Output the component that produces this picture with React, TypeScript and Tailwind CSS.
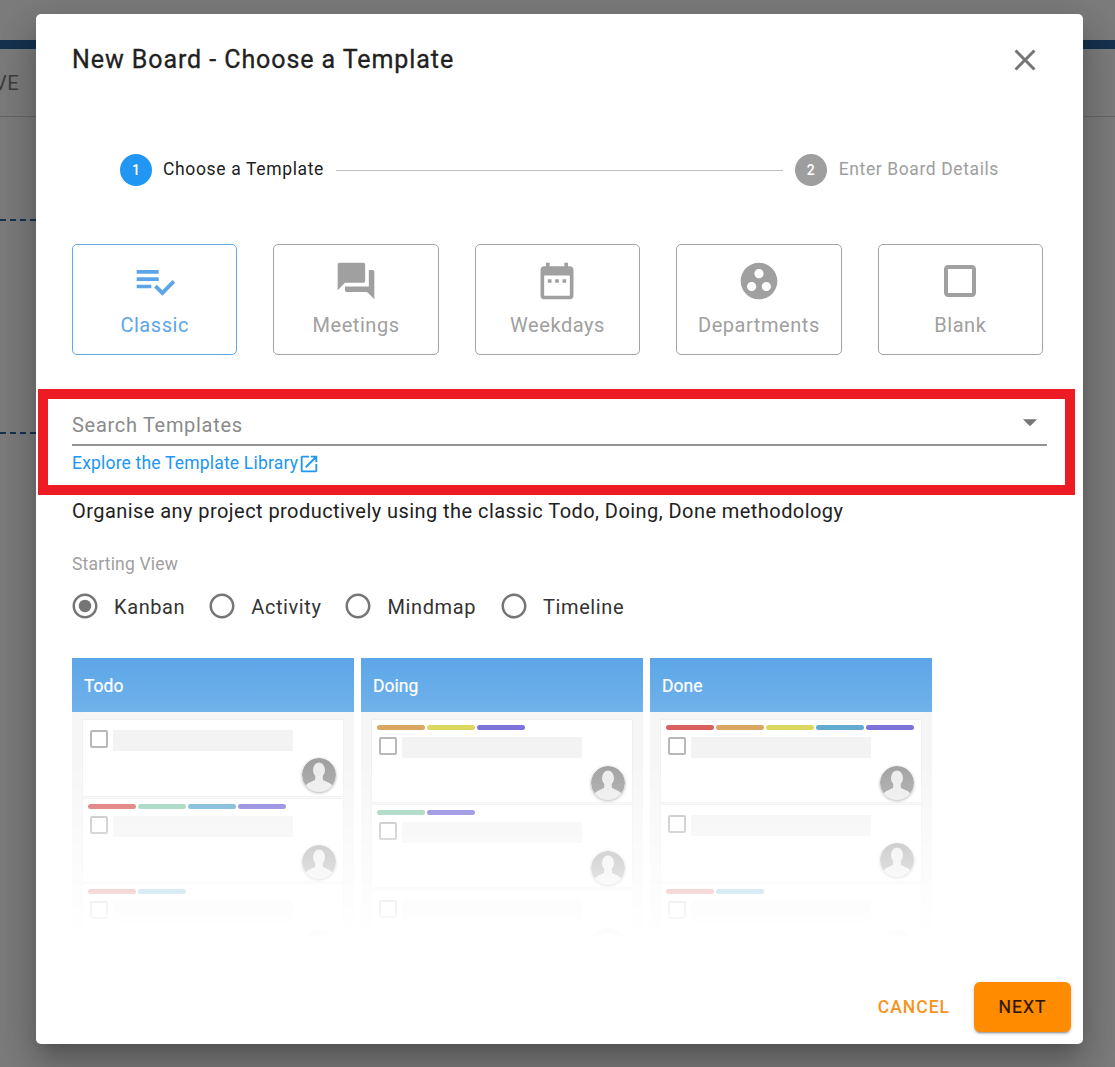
import React from 'react';

const paths = {
    classic: 'M14 10H2v2h12v-2zm0-4H2v2h12V6zM2 16h8v-2H2v2zm19.5-4.5L23 13l-6.99 7-4.51-4.5L13 14l3.01 3 5.49-5.5z',
    meetings: 'M21 6h-2v9H6v2c0 .55.45 1 1 1h11l4 4V7c0-.55-.45-1-1-1zm-4 6V3c0-.55-.45-1-1-1H3c-.55 0-1 .45-1 1v14l4-4h10c.55 0 1-.45 1-1z',
    weekdays: 'M9 11H7v2h2v-2zm4 0h-2v2h2v-2zm4 0h-2v2h2v-2zm2-7h-1V2h-2v2H8V2H6v2H5c-1.11 0-1.99.9-1.99 2L3 20c0 1.1.89 2 2 2h14c1.1 0 2-.9 2-2V6c0-1.1-.9-2-2-2zm0 16H5V9h14v11z',
    departments: 'M12 2C6.48 2 2 6.48 2 12s4.48 10 10 10 10-4.48 10-10S17.52 2 12 2zM8 17.5c-1.38 0-2.5-1.12-2.5-2.5s1.12-2.5 2.5-2.5 2.5 1.12 2.5 2.5-1.12 2.5-2.5 2.5zM9.5 8c0-1.38 1.12-2.5 2.5-2.5s2.5 1.12 2.5 2.5-1.12 2.5-2.5 2.5S9.5 9.38 9.5 8zm6.5 9.5c-1.38 0-2.5-1.12-2.5-2.5s1.12-2.5 2.5-2.5 2.5 1.12 2.5 2.5-1.12 2.5-2.5 2.5z',
    blank: 'M18 4H6c-1.1 0-2 .9-2 2v12c0 1.1.9 2 2 2h12c1.1 0 2-.9 2-2V6c0-1.1-.9-2-2-2zm0 14H6V6h12v12z',
    close: 'M19 6.41L17.59 5 12 10.59 6.41 5 5 6.41 10.59 12 5 17.59 6.41 19 12 13.41 17.59 19 19 17.59 13.41 12z',
    external: 'M19 19H5V5h7V3H5c-1.11 0-2 .9-2 2v14c0 1.1.89 2 2 2h14c1.1 0 2-.9 2-2v-7h-2v7zM14 3v2h3.59l-9.83 9.83 1.41 1.41L19 6.41V10h2V3h-7z',
    radio: 'M12 2C6.48 2 2 6.48 2 12s4.48 10 10 10 10-4.48 10-10S17.52 2 12 2zm0 18c-4.42 0-8-3.58-8-8s3.58-8 8-8 8 3.58 8 8-3.58 8-8 8z',
};

const Icon: React.FC<{ d: string; className: string }> = ({ d, className }) => (
    <svg viewBox="0 0 24 24" fill="currentColor" className={className}>
        <path d={d} />
    </svg>
);

const templates = [
    { label: 'Classic', icon: paths.classic, active: true, iconClass: 'w-[44px] h-[44px]' },
    { label: 'Meetings', icon: paths.meetings, iconClass: 'w-[44px] h-[44px]' },
    { label: 'Weekdays', icon: paths.weekdays, iconClass: 'w-[44px] h-[44px]' },
    { label: 'Departments', icon: paths.departments, iconClass: 'w-[44px] h-[44px]' },
    { label: 'Blank', icon: paths.blank, iconClass: 'w-[48px] h-[48px] -my-[2px]' },
];

const views = [
    { label: 'Kanban', checked: true, className: 'mr-[24px]' },
    { label: 'Activity', className: 'mr-[24px]' },
    { label: 'Mindmap', className: 'mr-[25px]' },
    { label: 'Timeline', className: '' },
];

const red = 'bg-[#d9605f]';
const orange = 'bg-[#d9a75f]';
const yellow = 'bg-[#dcd75f]';
const green = 'bg-[#8fcfb2]';
const blue = 'bg-[#62abd0]';
const purple = 'bg-[#7b73d9]';

const columns = [
    {
        title: 'Todo',
        cards: [[], [red, green, blue, purple], [red, blue]],
    },
    {
        title: 'Doing',
        cards: [[orange, yellow, purple], [green, purple], []],
    },
    {
        title: 'Done',
        cards: [[red, orange, yellow, blue, purple], [], [red, blue]],
    },
];

const Avatar = () => (
    <svg viewBox="0 0 34 34" className="w-[34px] h-[34px] rounded-full shadow-[0_1px_3px_rgba(0,0,0,0.35)]">
        <circle cx="17" cy="17" r="17" fill="#a0a0a0" />
        <ellipse cx="17" cy="12" rx="6" ry="7.5" fill="#ececec" />
        <path d="M13.5 17h7l.5 5 6.500 3c1.500.8 2.500 2 3 3.500C27.500 32 22.500 34 17 34S6.500 32 3.500 28.500c.5-1.500 1.500-2.700 3-3.500l6.500-3z" fill="#ececec" />
    </svg>
);

const MiniCard: React.FC<{ labels: string[] }> = ({ labels }) => {
    const hasLabels = labels.length > 0;
    return (
        <div className={`bg-white border border-[#f0f0f0] px-[6px] pt-[5px] mb-px ${hasLabels ? 'pb-[2px]' : 'pb-[4px]'}`}>
            {hasLabels && (
                <div className="flex gap-[2px] mb-[7px] -ml-px">
                    {labels.map((color, i) => (
                        <div key={i} className={`w-[48px] h-[5px] rounded-full ${color}`} />
                    ))}
                </div>
            )}
            <div className={`flex gap-[5px] ml-px ${hasLabels ? '' : 'pt-[5px]'}`}>
                <div className="w-[18px] h-[18px] rounded-[2px] border-2 border-[#b8b8b8] bg-white" />
                <div className="w-[180px] h-[21px] bg-[#f3f3f3]" />
            </div>
            <div className={`flex justify-end mr-px ${hasLabels ? 'mt-[8px]' : 'mt-[7px]'}`}>
                <Avatar />
            </div>
        </div>
    );
};

const App: React.FC = () => {
    return (
        <div className="relative w-screen h-screen overflow-hidden bg-[#7c7c7c] font-['Roboto',sans-serif]">
            {/* Page behind the dialog */}
            <div className="absolute inset-0">
                <div className="mt-[40px] h-[9px] bg-[#16324f]" />
                <div className="h-[68px] border-b border-[#666666] flex items-center">
                    <span className="-ml-[6px] text-[20px] text-[#3d3d3d] tracking-[0.02em]">VE</span>
                </div>
                <div className="mt-[102px] w-[36px] border-t-2 border-dashed border-[#16324f]" />
                <div className="mt-[211px] w-[36px] border-t-2 border-dashed border-[#16324f]" />
            </div>

            {/* Dialog */}
            <div className="relative ml-[36px] mt-[14px] w-[1047px] h-[1030px] bg-white rounded-[5px] px-[36px] shadow-[0_11px_15px_-7px_rgba(0,0,0,0.2),0_24px_38px_3px_rgba(0,0,0,0.14),0_9px_46px_8px_rgba(0,0,0,0.12)]">
                <div className="flex items-start justify-between h-[90px]">
                    <h2 className="mt-[30px] text-[25px] leading-[32px] font-normal tracking-[0.92px] text-[#212121] [-webkit-text-stroke:0.3px_#212121]">
                        New Board - Choose a Template
                    </h2>
                    <Icon d={paths.close} className="w-[36px] h-[36px] mt-[28px] mr-[4px] text-[#757575]" />
                </div>

                {/* Stepper */}
                <div className="flex items-center mt-[50px] mx-[48px] h-[32px] text-[17.5px] tracking-[0.65px]">
                    <div className="w-[32px] h-[32px] rounded-full bg-[#2196f3] text-white text-[14px] font-medium tracking-normal flex items-center justify-center">1</div>
                    <span className="ml-[11px] -mt-[2px] text-[#212121]">Choose a Template</span>
                    <div className="flex-1 mx-[12px] border-t border-[#bdbdbd]" />
                    <div className="w-[32px] h-[32px] rounded-full bg-[#9e9e9e] text-white text-[14px] font-medium tracking-normal flex items-center justify-center">2</div>
                    <span className="ml-[12px] -mt-[2px] text-[#9e9e9e] tracking-[0.6px]">Enter Board Details</span>
                </div>

                {/* Template choices */}
                <div className="grid grid-cols-5 gap-[36px] mt-[58px] w-[971px]">
                    {templates.map((t) => (
                        <div
                            key={t.label}
                            className={`h-[111px] rounded-[5px] border flex flex-col items-center pt-[14px] ${t.active ? 'border-[#64a8e6] text-[#5ca6e8]' : 'border-[#a3a3a3] text-[#a0a0a0]'}`}
                        >
                            <Icon d={t.icon} className={t.iconClass} />
                            <span className="mt-[10px] text-[20px] leading-[24px] tracking-[0.55px]">{t.label}</span>
                        </div>
                    ))}
                </div>

                {/* Template search */}
                <div className="mt-[44px] h-[47px] border-b-2 border-[#949494] flex items-center justify-between">
                    <span className="mt-[7px] text-[20px] tracking-[0.7px] text-[#8a8a8a]">Search Templates</span>
                    <svg viewBox="0 0 24 24" fill="currentColor" className="w-[34px] h-[34px] mr-0 text-[#757575]">
                        <path d="M7 10l5 5 5-5z" />
                    </svg>
                </div>
                <div className="h-[33px] pt-[2px] flex items-center text-[17.5px] tracking-[0.01071em] text-[#2196f3]">
                    Explore the Template Library
                    <Icon d={paths.external} className="w-[22px] h-[22px]" />
                </div>

                <p className="mt-[17px] h-[30px] leading-[30px] text-[20px] tracking-[0.44px] text-[#212121]">
                    Organise any project productively using the classic Todo, Doing, Done methodology
                </p>

                <div className="mt-[27px] h-[22px] leading-[22px] text-[17.5px] text-[#a0a0a0] tracking-[0.01071em]">Starting View</div>

                <div className="mt-[16px] h-[30px] flex items-center">
                    {views.map((v) => (
                        <div key={v.label} className={`flex items-center ${v.className}`}>
                            <svg viewBox="0 0 24 24" fill="currentColor" className="w-[30px] h-[30px] -ml-[2.5px] text-[#757575]">
                                <path d={paths.radio} />
                                {v.checked && <circle cx="12" cy="12" r="5" />}
                            </svg>
                            <span className="ml-[14.5px] mt-px text-[20px] tracking-[0.6px] text-[#333333]">{v.label}</span>
                        </div>
                    ))}
                </div>

                {/* Board preview */}
                <div className="mt-[37px] h-[282px] flex gap-[7px] overflow-hidden">
                    {columns.map((col) => (
                        <div key={col.title} className="w-[282px]">
                            <div className="h-[54px] bg-gradient-to-b from-[#5ca6e8] to-[#70b2ea] flex items-center pl-[12px] pt-[2px] text-[17.5px] text-white [-webkit-text-stroke:0.2px_white]">
                                {col.title}
                            </div>
                            <div className="h-[228px] bg-[#f6f6f6] px-[10px] pt-[7px] overflow-hidden [mask-image:linear-gradient(to_bottom,black_50px,rgba(0,0,0,0.45)_140px,transparent_226px)]">
                                {col.cards.map((labels, i) => (
                                    <MiniCard key={i} labels={labels} />
                                ))}
                            </div>
                        </div>
                    ))}
                </div>

                {/* Actions */}
                <div className="mt-[42px] -mr-[24px] flex items-center justify-end">
                    <span className="mr-[24px] text-[17.5px] font-medium tracking-[1px] text-[#f7931e]">CANCEL</span>
                    <div className="w-[97px] h-[50px] rounded-[6px] bg-[#ff8c00] flex items-center justify-center text-[17.5px] tracking-[1px] text-[#2b1700] [-webkit-text-stroke:0.2px_#2b1700] shadow-[0_3px_1px_-2px_rgba(0,0,0,0.2),0_2px_2px_0_rgba(0,0,0,0.14),0_1px_5px_0_rgba(0,0,0,0.12)]">
                        NEXT
                    </div>
                </div>
            </div>

            {/* Red highlight drawn over the dialog */}
            <div className="absolute left-[38px] top-[389px] w-[1037px] h-[106px] border-[10px] border-[#ed1c24]" />
        </div>
    );
};

export default App;
